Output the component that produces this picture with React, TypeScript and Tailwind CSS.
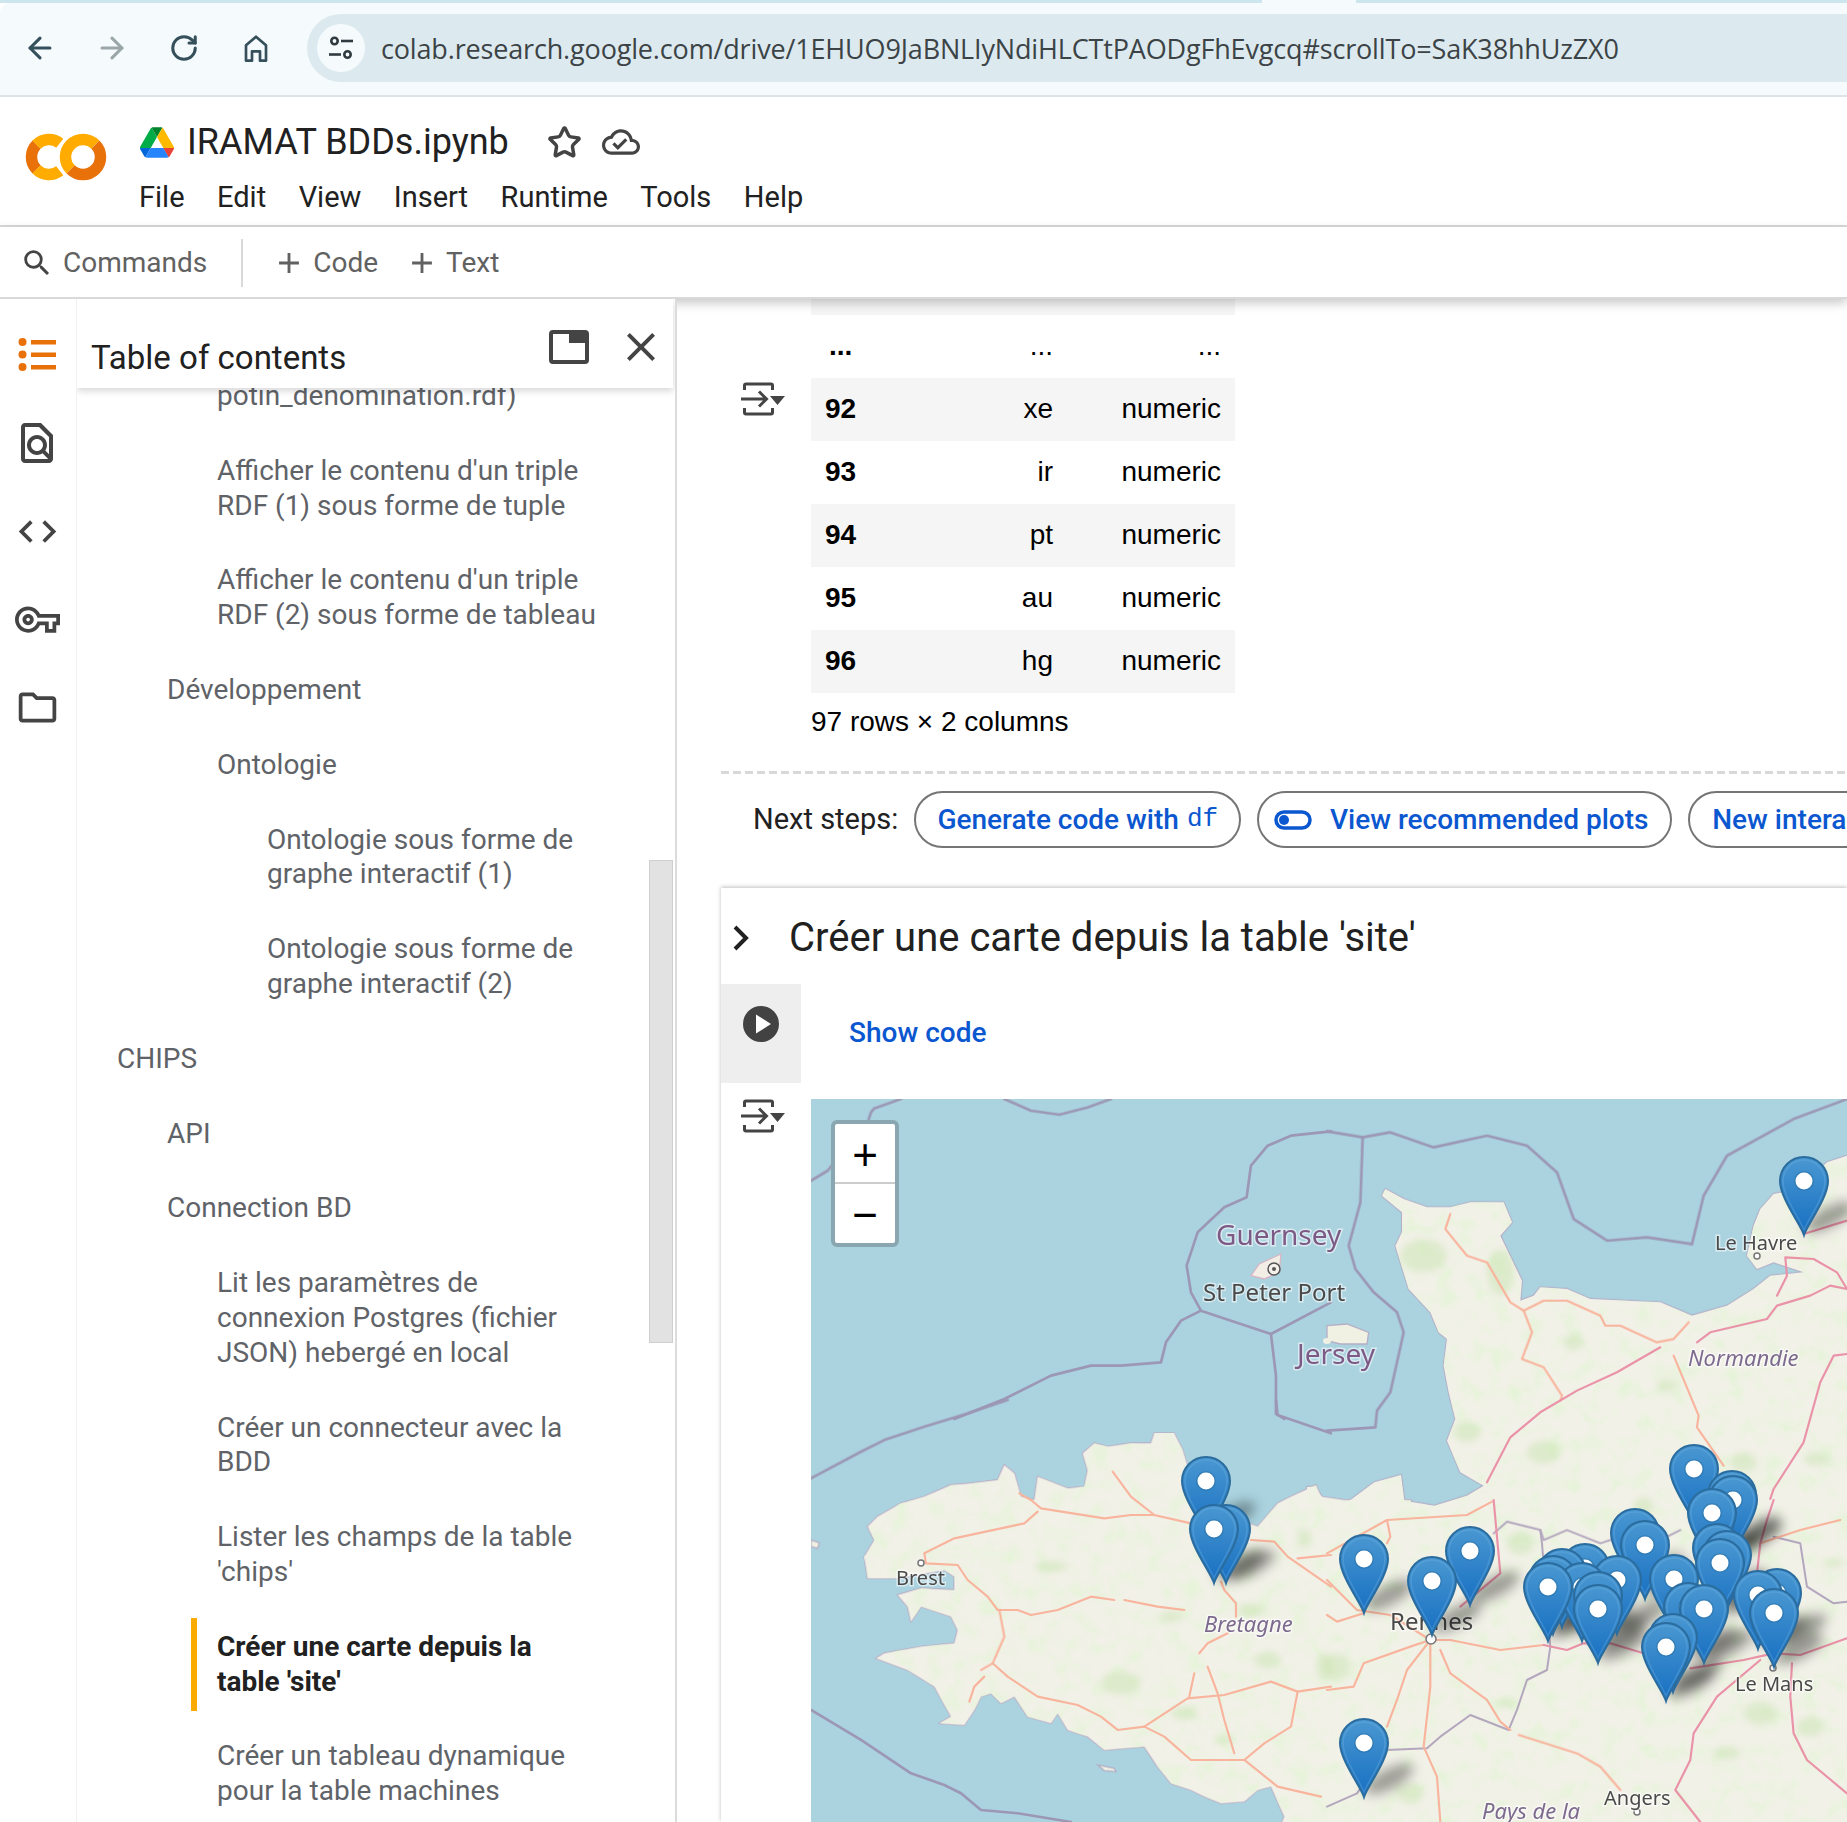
import { ArrowLeft, ArrowRight, RotateCw, Star } from "lucide-react";

const MP = {
  cloud: "M19.35 10.04C18.67 6.59 15.64 4 12 4 9.11 4 6.6 5.64 5.35 8.04 2.34 8.36 0 10.91 0 14c0 3.31 2.69 6 6 6h13c2.76 0 5-2.24 5-5 0-2.64-2.05-4.78-4.65-4.96zM19 18H6c-2.21 0-4-1.79-4-4 0-2.05 1.53-3.76 3.56-3.97l1.07-.11.5-.95C8.08 7.14 9.94 6 12 6c2.62 0 4.88 1.86 5.39 4.43l.3 1.5 1.53.11c1.56.1 2.78 1.41 2.78 2.96 0 1.65-1.35 3-3 3zm-9-3.82l-2.09-2.09L6.5 13.5 10 17l6.01-6.01-1.41-1.41z",
  search: "M15.5 14h-.79l-.28-.27A6.471 6.471 0 0 0 16 9.5 6.5 6.5 0 1 0 9.5 16c1.61 0 3.09-.59 4.23-1.57l.27.28v.79l5 4.99L20.49 19l-4.99-5zm-6 0C7.01 14 5 11.99 5 9.5S7.01 5 9.5 5 14 7.01 14 9.5 11.99 14 9.5 14z",
  plus: "M19 13h-6v6h-2v-6H5v-2h6V5h2v6h6v2z",
  find: "M14 2H6c-1.1 0-1.99.9-1.99 2L4 20c0 1.1.89 2 1.99 2H18c1.1 0 2-.9 2-2V8l-6-6zM6 4h7l5 5v8.58l-1.84-1.84c1.28-1.94 1.07-4.57-.64-6.28C14.55 8.49 13.28 8 12 8c-1.28 0-2.55.49-3.53 1.46-1.95 1.95-1.95 5.11 0 7.05.97.97 2.25 1.46 3.53 1.46.97 0 1.94-.29 2.77-.83L17.6 20H6V4zm8.11 11.1c-.56.56-1.31.88-2.11.88s-1.55-.31-2.11-.88c-.56-.56-.88-1.31-.88-2.11s.31-1.55.88-2.11c.56-.57 1.31-.88 2.11-.88s1.55.31 2.11.88c.56.56.88 1.31.88 2.11s-.31 1.55-.88 2.11z",
  code: "M9.4 16.6L4.8 12l4.6-4.6L8 6l-6 6 6 6 1.4-1.4zm5.2 0l4.6-4.6-4.6-4.6L16 6l6 6-6 6-1.4-1.4z",
  key: "M22 19h-6v-4h-2.68c-1.14 2.42-3.6 4-6.32 4-3.86 0-7-3.14-7-7s3.14-7 7-7c2.72 0 5.17 1.58 6.32 4H24v6h-2v4zm-4-2h2v-4h2v-2H11.94l-.23-.67C11.01 8.34 9.11 7 7 7c-2.76 0-5 2.24-5 5s2.24 5 5 5c2.11 0 4.01-1.34 4.71-3.33l.23-.67H18v4zM7 15c-1.65 0-3-1.35-3-3s1.35-3 3-3 3 1.35 3 3-1.35 3-3 3zm0-4c-.55 0-1 .45-1 1s.45 1 1 1 1-.45 1-1-.45-1-1-1z",
  folder: "M9.17 6l2 2H20v10H4V6h5.17M10 4H4c-1.1 0-1.99.9-1.99 2L2 18c0 1.1.9 2 2 2h16c1.1 0 2-.9 2-2V8c0-1.1-.9-2-2-2h-8l-2-2z",
  close: "M19 6.41L17.59 5 12 10.59 6.41 5 5 6.41 10.59 12 5 17.59 6.41 19 12 13.41 17.59 19 19 17.59 13.41 12z",
};

function MIcon({ d, className }: { d: string; className: string }) {
  return (
    <svg viewBox="0 0 24 24" className={className} fill="currentColor">
      <path d={d} />
    </svg>
  );
}

function arc(cx: number, cy: number, r: number, a0: number, a1: number) {
  const p = (a: number) => [cx + r * Math.cos((a * Math.PI) / 180), cy + r * Math.sin((a * Math.PI) / 180)];
  const [x0, y0] = p(a0);
  const [x1, y1] = p(a1);
  return `M${x0} ${y0}A${r} ${r} 0 ${a1 - a0 > 180 ? 1 : 0} 1 ${x1} ${y1}`;
}

function ColabLogo() {
  return (
    <svg width="82" height="50" viewBox="0 0 82 50" fill="none" strokeWidth="11.5">
      <path d={arc(24, 25, 17.5, 135, 225)} stroke="#e8710a" />
      <path d={arc(24, 25, 17.5, 224, 308)} stroke="#ffab00" />
      <path d={arc(24, 25, 17.5, 52, 136)} stroke="#ffab00" />
      <path d={arc(58, 25, 17.5, 135, 315)} stroke="#ffab00" />
      <path d={arc(58, 25, 17.5, -45, 135)} stroke="#e8710a" />
    </svg>
  );
}

function DriveLogo() {
  return (
    <svg width="34" height="31" viewBox="0 0 87.3 78">
      <path d="m6.6 66.85 3.85 6.65c.8 1.4 1.95 2.5 3.3 3.3l13.75-23.8h-27.5c0 1.55.4 3.1 1.2 4.5z" fill="#0066da" />
      <path d="m43.65 25-13.75-23.8c-1.35.8-2.5 1.9-3.3 3.3l-25.4 44a9.06 9.06 0 0 0 -1.2 4.5h27.5z" fill="#00ac47" />
      <path d="m73.55 76.8c1.35-.8 2.5-1.9 3.3-3.3l1.6-2.75 7.65-13.25c.8-1.4 1.2-2.95 1.2-4.5h-27.502l5.852 11.5z" fill="#ea4335" />
      <path d="m43.65 25 13.75-23.8c-1.35-.8-2.9-1.2-4.5-1.2h-18.5c-1.6 0-3.15.45-4.5 1.2z" fill="#00832d" />
      <path d="m59.8 53h-32.3l-13.75 23.8c1.35.8 2.9 1.2 4.5 1.2h50.8c1.6 0 3.15-.45 4.5-1.2z" fill="#2684fc" />
      <path d="m73.4 26.5-12.7-22c-.8-1.4-1.95-2.5-3.3-3.3l-13.75 23.8 16.15 28h27.45c0-1.55-.4-3.1-1.2-4.5z" fill="#ffba00" />
    </svg>
  );
}

function OutputIcon() {
  return (
    <svg width="44" height="34" viewBox="0 0 44 34" fill="none" stroke="#444" strokeWidth="3">
      <path d="M3.5 8V3.5a1.5 1.5 0 0 1 1.5-1.5H30a1.5 1.5 0 0 1 1.500 1.500V8" />
      <path d="M3.5 26v4.500a1.500 1.500 0 0 0 1.500 1.500H30a1.500 1.500 0 0 0 1.500-1.500V26" />
      <path d="M0 17H26M18 9.500L25.500 17L18 24.500" />
      <path d="M29 14H44L36.500 23Z" fill="#444" stroke="none" />
    </svg>
  );
}

const TOC: { d: number; lines: string[]; active?: boolean }[] = [
  { d: 3, lines: ["potin_denomination.rdf)"] },
  { d: 3, lines: ["Afficher le contenu d'un triple", "RDF (1) sous forme de tuple"] },
  { d: 3, lines: ["Afficher le contenu d'un triple", "RDF (2) sous forme de tableau"] },
  { d: 2, lines: ["Développement"] },
  { d: 3, lines: ["Ontologie"] },
  { d: 4, lines: ["Ontologie sous forme de", "graphe interactif (1)"] },
  { d: 4, lines: ["Ontologie sous forme de", "graphe interactif (2)"] },
  { d: 1, lines: ["CHIPS"] },
  { d: 2, lines: ["API"] },
  { d: 2, lines: ["Connection BD"] },
  { d: 3, lines: ["Lit les paramètres de", "connexion Postgres (fichier", "JSON) hebergé en local"] },
  { d: 3, lines: ["Créer un connecteur avec la", "BDD"] },
  { d: 3, lines: ["Lister les champs de la table", "'chips'"] },
  { d: 3, lines: ["Créer une carte depuis la", "table 'site'"], active: true },
  { d: 3, lines: ["Créer un tableau dynamique", "pour la table machines"] },
];

const ROWS = [
  ["92", "xe", "numeric", true],
  ["93", "ir", "numeric", false],
  ["94", "pt", "numeric", true],
  ["95", "au", "numeric", false],
  ["96", "hg", "numeric", true],
] as const;

function TocItem({ item }: { item: (typeof TOC)[number] }) {
  const pad = item.d === 1 ? "pl-[40px]" : item.d === 2 ? "pl-[90px]" : item.d === 3 ? "pl-[140px]" : "pl-[190px]";
  if (item.active) {
    return (
      <div className="flex py-[8px] pl-[114px]">
        <div className="w-[6px] bg-[#f9ab00]" />
        <div className="py-[12px] pl-[20px] font-bold text-[#212121]">
          {item.lines.map((l) => (
            <div key={l}>{l}</div>
          ))}
        </div>
      </div>
    );
  }
  return (
    <div className={`py-[20px] ${pad}`}>
      {item.lines.map((l) => (
        <div key={l}>{l}</div>
      ))}
    </div>
  );
}

const Z8 = "translate(811 1400) scale(.3333)";
const Z9 = "translate(1327 1099) scale(.3333)";
const Z10 = "translate(1327 1500) scale(.3333)";
const Z11 = "translate(811 1099) scale(.3333)";

const LAND_WEST =
  "1600,300 1530,290 1515,255 1440,290 1400,310 1340,380 1315,370 1140,250 1130,200 1115,150 1090,100 1030,100 1020,130 1000,190 1060,215 1010,170 1020,130 960,130 890,140 850,130 815,160 830,210 820,260 770,265 680,230 670,300 630,290 610,220 580,195 560,240 480,250 420,255 340,290 270,310 200,350 170,380 190,420 160,470 170,535 260,535 400,510 430,530 430,570 330,565 260,585 290,620 300,665 330,620 420,650 440,690 430,730 330,740 220,760 195,775 290,810 370,860 420,950 385,970 460,975 490,930 510,890 540,880 570,910 610,890 650,950 720,970 740,940 770,990 830,1010 880,1050 940,1045 1000,1040 1040,1100 1080,1150 1140,1170 1180,1190 1230,1210 1300,1205 1340,1170 1380,1160 1420,1250 1400,1300 1800,1300 1800,300";
const LAND_EAST =
  "-60,2300 -60,1164 -39,1163 21,1240 142,1150 222,1128 232,1205 322,1220 420,1190 470,1160 400,1120 360,1025 385,960 365,880 350,800 360,720 335,700 310,640 245,570 205,440 225,400 225,340 165,290 175,270 230,300 300,325 370,325 430,310 530,310 555,370 520,410 585,545 580,605 620,590 640,565 720,570 790,600 1000,610 1095,650 1200,620 1280,570 1330,530 1430,520 1340,490 1290,510 1260,470 1280,380 1300,330 1340,285 1420,270 1500,190 1560,170 1700,170 1700,2300";

const BOUNDS: [string, string][] = [
  [Z11, "0,245 50,215 70,190 170,70 180,40 190,28 270,0"],
  [Z11, "580,0 660,35 745,47 830,25 900,0"],
  [Z11, "1560,97 1440,110 1370,140 1320,200 1307,295 1240,325 1160,400 1127,500 1140,580 1170,635 1380,705 1560,610"],
  [Z11, "1170,635 1110,665 1065,730 1050,790 930,800 840,800 720,830 580,900 430,960"],
  [Z11, "1380,705 1395,830 1395,945 1420,960"],
  [Z8, "590,0 470,40 340,80 220,120 150,155 0,235"],
  [Z8, "1395,0 1400,45 1560,100"],
  [Z9, "0,995 145,985 150,935 190,880 230,700 210,640 140,580 85,510 65,440 100,310 107,115"],
  [Z9, "0,97 107,115 190,100 320,145 480,110 600,140 690,220 740,360 840,425 960,415 1095,435 1130,290 1200,170 1400,60 1560,0"],
  [Z8, "0,930 150,1020 300,1120 400,1155 450,1180 510,1230 620,1240 780,1266"],
];

const REGION: [string, string][] = [
  [Z10, "500,100 540,65 640,90 650,120 720,90 820,130 880,110 1000,120 1060,90"],
  [Z10, "640,90 645,130 670,440 660,510 600,540 570,630 545,690 430,645 340,710 300,745 180,750 90,880 0,920"],
  [Z10, "1340,110 1420,130 1440,260 1520,310 1560,305"],
];

const ORANGE: [string, string][] = [
  [Z8, "1140,370 1030,345 960,345 880,355 690,325 660,300 625,280"],
  [Z8, "680,335 640,370 430,415 340,460 345,490 440,495 470,540 530,590 560,630 620,630 660,645 740,630 840,590 910,600"],
  [Z8, "940,600 1040,620 1120,630"],
  [Z8, "565,630 580,710 545,790 510,810"],
  [Z8, "545,790 590,830 680,890 800,915 870,950 920,990 1000,980 1060,1010 1140,1080 1300,1080 1400,1160 1530,1190"],
  [Z8, "1000,980 1130,895 1240,885 1380,845 1460,875 1560,860"],
  [Z8, "1460,875 1440,980 1360,1030 1300,1080"],
  [Z8, "905,215 960,290 1030,345"],
  [Z8, "1230,545 1240,570 1275,610 1275,650"],
  [Z8, "1250,700 1190,730 1165,760"],
  [Z8, "1190,800 1220,880 1240,960 1270,1060"],
  [Z8, "1150,820 1135,890"],
  [Z8, "1320,420 1390,425 1430,470 1560,560"],
  [Z8, "1460,475 1560,465"],
  [Z8, "520,830 490,860 475,905"],
  [Z9, "370,345 355,390 420,470 480,490 550,610 590,635 650,605 720,605 820,650 835,680 880,680 990,730 1040,720 1085,670"],
  [Z9, "590,635 615,700 585,780 650,805 705,890 700,905"],
  [Z9, "1040,770 1115,950 1110,985 1190,1100"],
  [Z10, "0,240 90,330 190,345 310,420"],
  [Z10, "0,345 30,365 110,340"],
  [Z10, "0,160 180,60 420,45 495,5"],
  [Z10, "180,60 190,110 180,130"],
  [Z10, "310,420 370,420 520,450 650,435"],
  [Z10, "310,420 250,440 110,490 80,560 0,570"],
  [Z10, "310,420 240,510 210,600 180,680"],
  [Z10, "310,420 310,560 290,740 330,830 340,966"],
  [Z10, "340,450 370,520 480,600 520,665 550,690"],
  [Z10, "575,705 750,760 820,800 880,870"],
  [Z10, "1300,130 1420,90 1540,60"],
];

const PINK: [string, string][] = [
  [Z9, "480,1150 550,1015 640,940 750,875 870,820 1000,745"],
  [Z9, "1110,730 1150,700 1320,660 1350,620 1450,590 1510,560 1560,570"],
  [Z9, "1430,405 1560,365"],
  [Z9, "1560,765 1520,770 1480,850 1430,1030 1340,1170 1330,1200"],
  [Z9, "1350,590 1380,530 1375,475 1460,480 1530,520 1560,570"],
  [Z10, "650,435 720,450 770,430 850,430 950,460"],
  [Z10, "1090,505 1250,480 1340,460 1420,465 1560,415"],
  [Z10, "1300,480 1170,590 1100,700 1090,780 1045,870 1120,966"],
  [Z10, "1395,490 1390,590 1400,700 1440,780 1560,880"],
  [Z10, "500,0 520,220 400,320"],
  [Z10, "1340,0 1320,60 1300,130 1290,220"],
];

const GREEN: [string, number, number, number, number][] = [
  [Z8, 1080, 650, 35, 18],
  [Z8, 1320, 630, 40, 20],
  [Z8, 1370, 780, 40, 25],
  [Z8, 1540, 800, 25, 40],
  [Z8, 1480, 415, 22, 28],
  [Z8, 720, 500, 50, 16],
  [Z8, 930, 850, 60, 35],
  [Z8, 1120, 940, 40, 20],
  [Z8, 1240, 1020, 30, 12],
  [Z9, 290, 470, 70, 50],
  [Z9, 520, 520, 40, 70],
  [Z9, 740, 730, 30, 25],
  [Z9, 650, 1060, 50, 35],
  [Z9, 1020, 860, 30, 20],
  [Z9, 1470, 1080, 40, 20],
  [Z9, 1250, 1090, 40, 30],
  [Z9, 420, 1000, 40, 30],
  [Z10, 30, 500, 40, 40],
  [Z10, 250, 880, 40, 30],
  [Z10, 540, 610, 30, 12],
  [Z10, 580, 130, 40, 35],
  [Z10, 1300, 640, 50, 35],
  [Z10, 1450, 680, 40, 30],
  [Z10, 1520, 190, 30, 12],
  [Z10, 950, 20, 30, 30],
  [Z10, 1200, 760, 40, 20],
];

const PINS: [number, number][] = [
  [1804, 1181], [1694, 1469], [1206, 1481], [1732, 1495], [1733, 1500], [1712, 1513], [1226, 1529], [1214, 1529],
  [1635, 1533], [1645, 1545], [1717, 1548], [1470, 1551], [1727, 1555], [1364, 1559], [1720, 1563], [1585, 1568],
  [1562, 1573], [1553, 1580], [1617, 1580], [1674, 1579], [1432, 1581], [1582, 1587], [1548, 1587], [1777, 1593],
  [1758, 1595], [1598, 1596], [1688, 1607], [1704, 1609], [1598, 1609], [1774, 1613], [1673, 1638], [1666, 1647],
  [1364, 1743],
];

const PIN_D = "M0 54C-3 44-24 17-24 0A24 24 0 0 1 24 0C24 17 3 44 0 54Z";

function Polys({ data, color, width }: { data: [string, string][]; color: string; width: number }) {
  return (
    <>
      {data.map(([t, pts]) => (
        <polyline key={pts} transform={t} points={pts} fill="none" stroke={color} strokeWidth={width} strokeLinejoin="round" strokeLinecap="round" />
      ))}
    </>
  );
}

function MapLabel({ x, y, size, fill, italic, children }: { x: number; y: number; size: number; fill: string; italic?: boolean; children: string }) {
  return (
    <text
      x={x}
      y={y}
      fontSize={size}
      fill={fill}
      fontStyle={italic ? "italic" : "normal"}
      fontFamily="'Noto Sans', 'Open Sans', sans-serif"
      stroke="#ffffff"
      strokeOpacity=".55"
      strokeWidth="3"
      paintOrder="stroke"
    >
      {children}
    </text>
  );
}

function MapCanvas() {
  return (
    <svg width="1036" height="723" viewBox="811 1099 1036 723" className="block">
      <defs>
        <filter id="soft" x="-5%" y="-5%" width="110%" height="110%">
          <feGaussianBlur stdDeviation="0.7" />
        </filter>
        <filter id="labelsoft" x="-5%" y="-5%" width="110%" height="110%">
          <feGaussianBlur stdDeviation="0.4" />
        </filter>
        <filter id="patch" x="-50%" y="-50%" width="200%" height="200%">
          <feGaussianBlur stdDeviation="3" />
        </filter>
        <filter id="mottle" x="0" y="0" width="100%" height="100%">
          <feTurbulence type="fractalNoise" baseFrequency="0.055" numOctaves="4" seed="7" />
          <feColorMatrix type="matrix" values="0 0 0 0 0.78  0 0 0 0 0.90  0 0 0 0 0.68  2.2 0 0 0 -0.98" />
        </filter>
        <filter id="pinshadow" x="-100%" y="-100%" width="300%" height="300%">
          <feGaussianBlur stdDeviation="6" />
        </filter>
        <clipPath id="landclip">
          <polygon transform={Z8} points={LAND_WEST} />
          <polygon transform={Z9} points={LAND_EAST} />
        </clipPath>
        <linearGradient id="pinfill" x1="0" y1="0" x2="0" y2="1">
          <stop offset="0" stopColor="#4a98d2" />
          <stop offset="1" stopColor="#176fc1" />
        </linearGradient>
      </defs>
      <rect x="811" y="1099" width="1036" height="723" fill="#aad3df" />
      <g filter="url(#soft)">
        <polygon transform={Z8} points={LAND_WEST} fill="#b5aec6" stroke="#b5aec6" strokeWidth="6" strokeLinejoin="round" />
        <polygon transform={Z9} points={LAND_EAST} fill="#b5aec6" stroke="#b5aec6" strokeWidth="6" strokeLinejoin="round" />
        <polygon transform={Z8} points={LAND_WEST} fill="#f2f1e8" />
        <polygon transform={Z9} points={LAND_EAST} fill="#f2f1e8" />
        <g clipPath="url(#landclip)">
          <rect x="811" y="1099" width="1036" height="723" filter="url(#mottle)" />
          <g filter="url(#patch)">
            {GREEN.map(([t, x, y, rx, ry]) => (
              <ellipse key={`${x}-${y}`} transform={t} cx={x} cy={y} rx={rx} ry={ry} fill="#c5e3ab" opacity=".45" />
            ))}
          </g>
        </g>
        <polygon transform={Z8} points="860,1095 910,1105 915,1115 880,1112" fill="#f0f1e3" stroke="#b5aec6" strokeWidth="4" />
        <polygon transform={Z8} points="0,420 25,428 20,445 0,440" fill="#f0f1e3" stroke="#b5aec6" strokeWidth="4" />
        <polygon transform={Z11} points="1320,530 1345,495 1410,465 1405,520 1360,540" fill="#f2eee6" stroke="#d6b6c6" strokeWidth="4" />
        <polygon transform={Z9} points="0,680 60,675 125,700 120,735 40,735 0,725" fill="#f0f1e3" stroke="#b5aec6" strokeWidth="4" />
        <ellipse cx="1327" cy="1341" rx="4" ry="3" fill="#f0f1e3" />
        <Polys data={REGION} color="#b3a7be" width={6} />
        <Polys data={ORANGE} color="#f8b49d" width={6.500} />
        <Polys data={PINK} color="#ea92a8" width={6.500} />
        <Polys data={BOUNDS} color="#9c97b4" width={8} />
        <circle cx="1274" cy="1269" r="6" fill="#f4f1ec" stroke="#555" strokeWidth="1.500" />
        <circle cx="1274" cy="1269" r="2" fill="#555" />
        <circle cx="921" cy="1563" r="3" fill="#fff" stroke="#777" strokeWidth="1.500" />
        <circle cx="1757" cy="1256" r="3" fill="#fff" stroke="#777" strokeWidth="1.500" />
        <circle cx="1431" cy="1639" r="5" fill="#fff" stroke="#777" strokeWidth="1.500" />
        <circle cx="1773" cy="1668" r="3" fill="#fff" stroke="#777" strokeWidth="1.500" />
        <circle cx="1637" cy="1812" r="3" fill="#fff" stroke="#777" strokeWidth="1.500" />
      </g>
      <g filter="url(#labelsoft)">
        <MapLabel x={1216} y={1245} size={28} fill="#7d5a86">Guernsey</MapLabel>
        <MapLabel x={1203} y={1301} size={24} fill="#4a4a4a">St Peter Port</MapLabel>
        <MapLabel x={1297} y={1364} size={28} fill="#7d5a86">Jersey</MapLabel>
        <MapLabel x={1688} y={1366} size={22} fill="#7d6a8f" italic>Normandie</MapLabel>
        <MapLabel x={1715} y={1250} size={20} fill="#4a4a4a">Le Havre</MapLabel>
        <MapLabel x={896} y={1585} size={20} fill="#4a4a4a">Brest</MapLabel>
        <MapLabel x={1204} y={1632} size={22} fill="#7d6a8f" italic>Bretagne</MapLabel>
        <MapLabel x={1390} y={1630} size={24} fill="#4a4a4a">Rennes</MapLabel>
        <MapLabel x={1735} y={1691} size={20} fill="#4a4a4a">Le Mans</MapLabel>
        <MapLabel x={1604} y={1805} size={20} fill="#4a4a4a">Angers</MapLabel>
        <MapLabel x={1482} y={1819} size={22} fill="#7d6a8f" italic>Pays de la</MapLabel>
      </g>
      <g filter="url(#pinshadow)">
        {PINS.map(([x, y]) => (
          <ellipse key={`s${x}-${y}`} cx={x + 25} cy={y + 36} rx={27} ry={10} transform={`rotate(-28 ${x + 25} ${y + 36})`} fill="#000" opacity=".34" />
        ))}
      </g>
      {PINS.map(([x, y]) => (
        <g key={`${x}-${y}`} transform={`translate(${x} ${y})`}>
          <path d={PIN_D} fill="url(#pinfill)" stroke="#2b6c9e" strokeWidth="2" />
          <path d="M0 49C-3 40-21 16-21 0A21 21 0 0 1 21 0C21 16 3 40 0 49Z" fill="none" stroke="#6fb2e2" strokeOpacity=".35" strokeWidth="1.500" />
          <circle r="10" fill="#2b6c9e" opacity=".45" />
          <circle r="8.500" fill="#fff" />
        </g>
      ))}
    </svg>
  );
}

export default function App() {
  return (
    <div className="h-[1822px] w-[1847px] overflow-hidden bg-white font-['Roboto',sans-serif] text-[#212121] flex flex-col">
      {/* browser chrome */}
      <div className="flex h-[3px] shrink-0">
        <div className="w-[1262px] bg-[#cde6ee]" />
        <div className="w-[94px] bg-[#f5fafd]" />
        <div className="flex-1 bg-[#cde6ee]" />
      </div>
      <div className="flex h-[94px] shrink-0 items-center border-b-2 border-[#dde3e6] bg-[#f5fafd] pl-[4px] pb-[2px] rounded-tl-[10px]">
        <div className="flex w-[72px] justify-center text-[#35505a]"><ArrowLeft size={34} strokeWidth={2.2} /></div>
        <div className="flex w-[72px] justify-center text-[#9aa6aa]"><ArrowRight size={34} strokeWidth={2.2} /></div>
        <div className="flex w-[72px] justify-center text-[#35505a]"><RotateCw size={30} strokeWidth={2.4} /></div>
        <div className="flex w-[72px] justify-center text-[#35505a]">
          <svg width="32" height="32" viewBox="0 0 24 24" fill="none" stroke="currentColor" strokeWidth="2">
            <path d="M4.500 21.500V10L12 3.500 19.500 10v11.500H15v-7H9v7Z" strokeLinejoin="round" />
          </svg>
        </div>
        <div className="ml-[15px] flex h-[68px] flex-1 items-center rounded-l-full bg-[#dceaef] pl-[10px]">
          <div className="flex h-[48px] w-[48px] items-center justify-center rounded-full bg-[#f5fafd]">
            <svg width="30" height="30" viewBox="0 0 30 30" fill="none" stroke="#2f3b40" strokeWidth="2.600">
              <circle cx="8.500" cy="8" r="3.200" />
              <path d="M15 8H27" />
              <circle cx="21.500" cy="21.500" r="3.200" />
              <path d="M3 21.500H15" />
            </svg>
          </div>
          <div className="ml-[16px] whitespace-nowrap pt-[2px] font-['Open_Sans',sans-serif] text-[27px] tracking-[-0.16px] text-[#3c4346]">
            colab.research.google.com/drive/1EHUO9JaBNLIyNdiHLCTtPAODgFhEvgcq#scrollTo=SaK38hhUzZX0
          </div>
        </div>
      </div>

      {/* colab header */}
      <div className="flex h-[130px] shrink-0 border-b-2 border-[#d9d9d9]">
        <div className="w-[140px] pl-[25px] pt-[35px]"><ColabLogo /></div>
        <div className="pt-[17px]">
          <div className="flex h-[56px] items-center">
            <DriveLogo />
            <span className="ml-[13px] text-[36px] text-[#212121]">IRAMAT BDDs.ipynb</span>
            <Star size={35} strokeWidth={2.4} className="ml-[38px] text-[#444]" />
            <MIcon d={MP.cloud} className="ml-[20px] h-[38px] w-[38px] text-[#444]" />
          </div>
          <div className="-ml-[1px] flex h-[56px] items-center gap-[32.5px] text-[29px] text-[#212121]">
            <span>File</span>
            <span>Edit</span>
            <span>View</span>
            <span>Insert</span>
            <span>Runtime</span>
            <span>Tools</span>
            <span>Help</span>
          </div>
        </div>
      </div>

      {/* toolbar */}
      <div className="relative z-10 flex h-[72px] shrink-0 items-center border-b-2 border-[#d9d9d9] bg-white pt-[1px] text-[28px] text-[#616161] shadow-[0_4px_10px_rgba(0,0,0,0.22)]">
        <MIcon d={MP.search} className="ml-[20px] h-[34px] w-[34px] text-[#444]" />
        <span className="ml-[9px]">Commands</span>
        <div className="ml-[34px] h-[48px] w-[2px] bg-[#d9d9d9]" />
        <MIcon d={MP.plus} className="ml-[29px] h-[34px] w-[34px] text-[#616161]" />
        <span className="ml-[7px]">Code</span>
        <MIcon d={MP.plus} className="ml-[27px] h-[34px] w-[34px] text-[#616161]" />
        <span className="ml-[7px]">Text</span>
      </div>

      <div className="flex min-h-0 flex-1">
        {/* sidebar */}
        <div className="relative z-20 flex w-[677px] shrink-0 border-r-2 border-[#dcdcdc] bg-white">
          <div className="flex w-[76px] shrink-0 flex-col items-center pr-[2px] pt-[12px] text-[#444]">
            <div className="flex h-[88px] items-center justify-center">
              <svg width="38" height="34" viewBox="0 0 38 34" fill="#e8710a">
                <circle cx="4.500" cy="4" r="4" />
                <circle cx="4.500" cy="16.500" r="4" />
                <circle cx="4.500" cy="29" r="4" />
                <rect x="13" y="2" width="25" height="4.500" />
                <rect x="13" y="14.500" width="25" height="4.500" />
                <rect x="13" y="27" width="25" height="4.500" />
              </svg>
            </div>
            <div className="flex h-[88px] items-center justify-center"><MIcon d={MP.find} className="h-[48px] w-[48px]" /></div>
            <div className="flex h-[88px] items-center justify-center"><MIcon d={MP.code} className="h-[45px] w-[45px]" /></div>
            <div className="flex h-[88px] items-center justify-center"><MIcon d={MP.key} className="h-[45px] w-[45px]" /></div>
            <div className="flex h-[88px] items-center justify-center"><MIcon d={MP.folder} className="h-[45px] w-[45px]" /></div>
          </div>
          <div className="relative min-w-0 flex-1 overflow-hidden border-l border-[#f1f1f1]">
            <div className="relative z-10 mr-[2px] flex h-[89px] items-start bg-white pl-[14px] shadow-[0_3px_7px_rgba(0,0,0,0.16)]">
              <span className="mt-[38px] text-[33px] leading-[42px] text-[#212121]">Table of contents</span>
              <svg width="40" height="34" viewBox="0 0 40 34" className="ml-auto mt-[31px]">
                <rect x="2" y="2" width="36" height="30" rx="2" fill="none" stroke="#444" strokeWidth="4" />
                <rect x="20" y="2" width="18" height="11" fill="#444" />
              </svg>
              <MIcon d={MP.close} className="ml-[28px] mr-[8px] mt-[24px] h-[48px] w-[48px] text-[#444]" />
            </div>
            <div className="-mt-[29px] text-[28px] leading-[34.8px] text-[#5f6368]">
              {TOC.map((it, i) => (
                <TocItem key={i} item={it} />
              ))}
            </div>
            <div className="absolute left-[572px] top-[561px] h-[483px] w-[24px] border border-[#cfcfcf] bg-[#e2e2e2]" />
          </div>
        </div>

        {/* notebook */}
        <div className="min-w-0 flex-1 overflow-hidden">
          <div className="flex">
            <div className="w-[134px] shrink-0 pl-[64px] pt-[83px]"><OutputIcon /></div>
            <div className="w-[424px] font-['Liberation_Sans',Arial,sans-serif] text-[28px] text-black">
              <div className="h-[16px] bg-[#f5f5f5]" />
              <div className="flex h-[63px] items-center px-[14px] pb-[2px]">
                <span className="w-[60px] pl-[4px] font-bold">...</span>
                <span className="w-[168px] text-right">...</span>
                <span className="flex-1 text-right">...</span>
              </div>
              {ROWS.map(([n, sym, t, striped]) => (
                <div key={n} className={`flex h-[63px] items-center px-[14px] pb-[2px] ${striped ? "bg-[#f5f5f5]" : "bg-white"}`}>
                  <span className="w-[60px] font-bold">{n}</span>
                  <span className="w-[168px] text-right">{sym}</span>
                  <span className="flex-1 text-right">{t}</span>
                </div>
              ))}
              <div className="pt-[9px] leading-[40px]">97 rows × 2 columns</div>
            </div>
          </div>
          <div className="ml-[44px] mt-[29px] h-[3px] bg-[repeating-linear-gradient(90deg,#d8d8d8_0,#d8d8d8_8px,transparent_8px,transparent_12px)]" />
          <div className="ml-[76px] mt-[17px] flex h-[57px] items-center whitespace-nowrap text-[28px] font-medium">
            <span className="text-[29px] font-normal text-[#212121]">Next steps:</span>
            <div className="ml-[16px] flex h-[57px] w-[327px] shrink-0 items-center justify-center rounded-full border-2 border-[#757575] text-[#0b57d0]">
              Generate code with<span className="ml-[8px] font-['Liberation_Mono',monospace] text-[26px] font-normal">df</span>
            </div>
            <div className="ml-[16px] flex h-[57px] w-[415px] shrink-0 items-center justify-center rounded-full border-2 border-[#757575] pr-[7px] text-[#0b57d0]">
              <svg width="38" height="20" viewBox="0 0 38 20" fill="none" className="mr-[18px]">
                <rect x="2" y="2" width="34" height="16" rx="8" stroke="#0b57d0" strokeWidth="3.500" />
                <circle cx="10" cy="10" r="5" fill="#0b57d0" />
              </svg>
              View recommended plots
            </div>
            <div className="ml-[16px] flex h-[57px] shrink-0 items-center rounded-full border-2 border-[#757575] px-[22px] text-[#0b57d0]">
              New interactive sheet
            </div>
          </div>
          <div className="ml-[44px] mt-[40px] bg-white shadow-[0_-1px_4px_rgba(0,0,0,0.25)]">
            <div className="flex h-[96px] items-center pt-[3px]">
              <svg width="18" height="28" viewBox="0 0 18 28" fill="none" stroke="#212121" strokeWidth="4" className="ml-[11px]">
                <path d="M3 3L14 14L3 25" />
              </svg>
              <span className="ml-[39px] text-[40px] text-[#212121]">Créer une carte depuis la table 'site'</span>
            </div>
            <div className="flex h-[99px]">
              <div className="w-[80px] bg-[#eeeeee] pl-[22px] pt-[22px]">
                <svg width="36" height="36" viewBox="0 0 36 36">
                  <circle cx="18" cy="18" r="18" fill="#424242" />
                  <path d="M13 8.500L28 18 13 27.500Z" fill="#fff" />
                </svg>
              </div>
              <div className="pl-[48px] pt-[28px] text-[28px] font-medium text-[#0b57d0]">Show code</div>
            </div>
            <div className="flex pt-[16px]">
              <div className="w-[90px] shrink-0 pl-[20px]"><OutputIcon /></div>
              <div className="relative h-[723px] flex-1 overflow-hidden">
                <MapCanvas />
                <div className="absolute left-[20px] top-[21px] w-[68px] rounded-[6px] border-4 border-[#8aa7b1] bg-white font-['Liberation_Sans',sans-serif] text-black">
                  <div className="flex h-[60px] items-center justify-center border-b-2 border-[#cccccc] pt-[3px] text-[44px] leading-none">+</div>
                  <div className="flex h-[59px] items-center justify-center pt-[2px] text-[44px] leading-none">−</div>
                </div>
              </div>
            </div>
          </div>
        </div>
      </div>
    </div>
  );
}
